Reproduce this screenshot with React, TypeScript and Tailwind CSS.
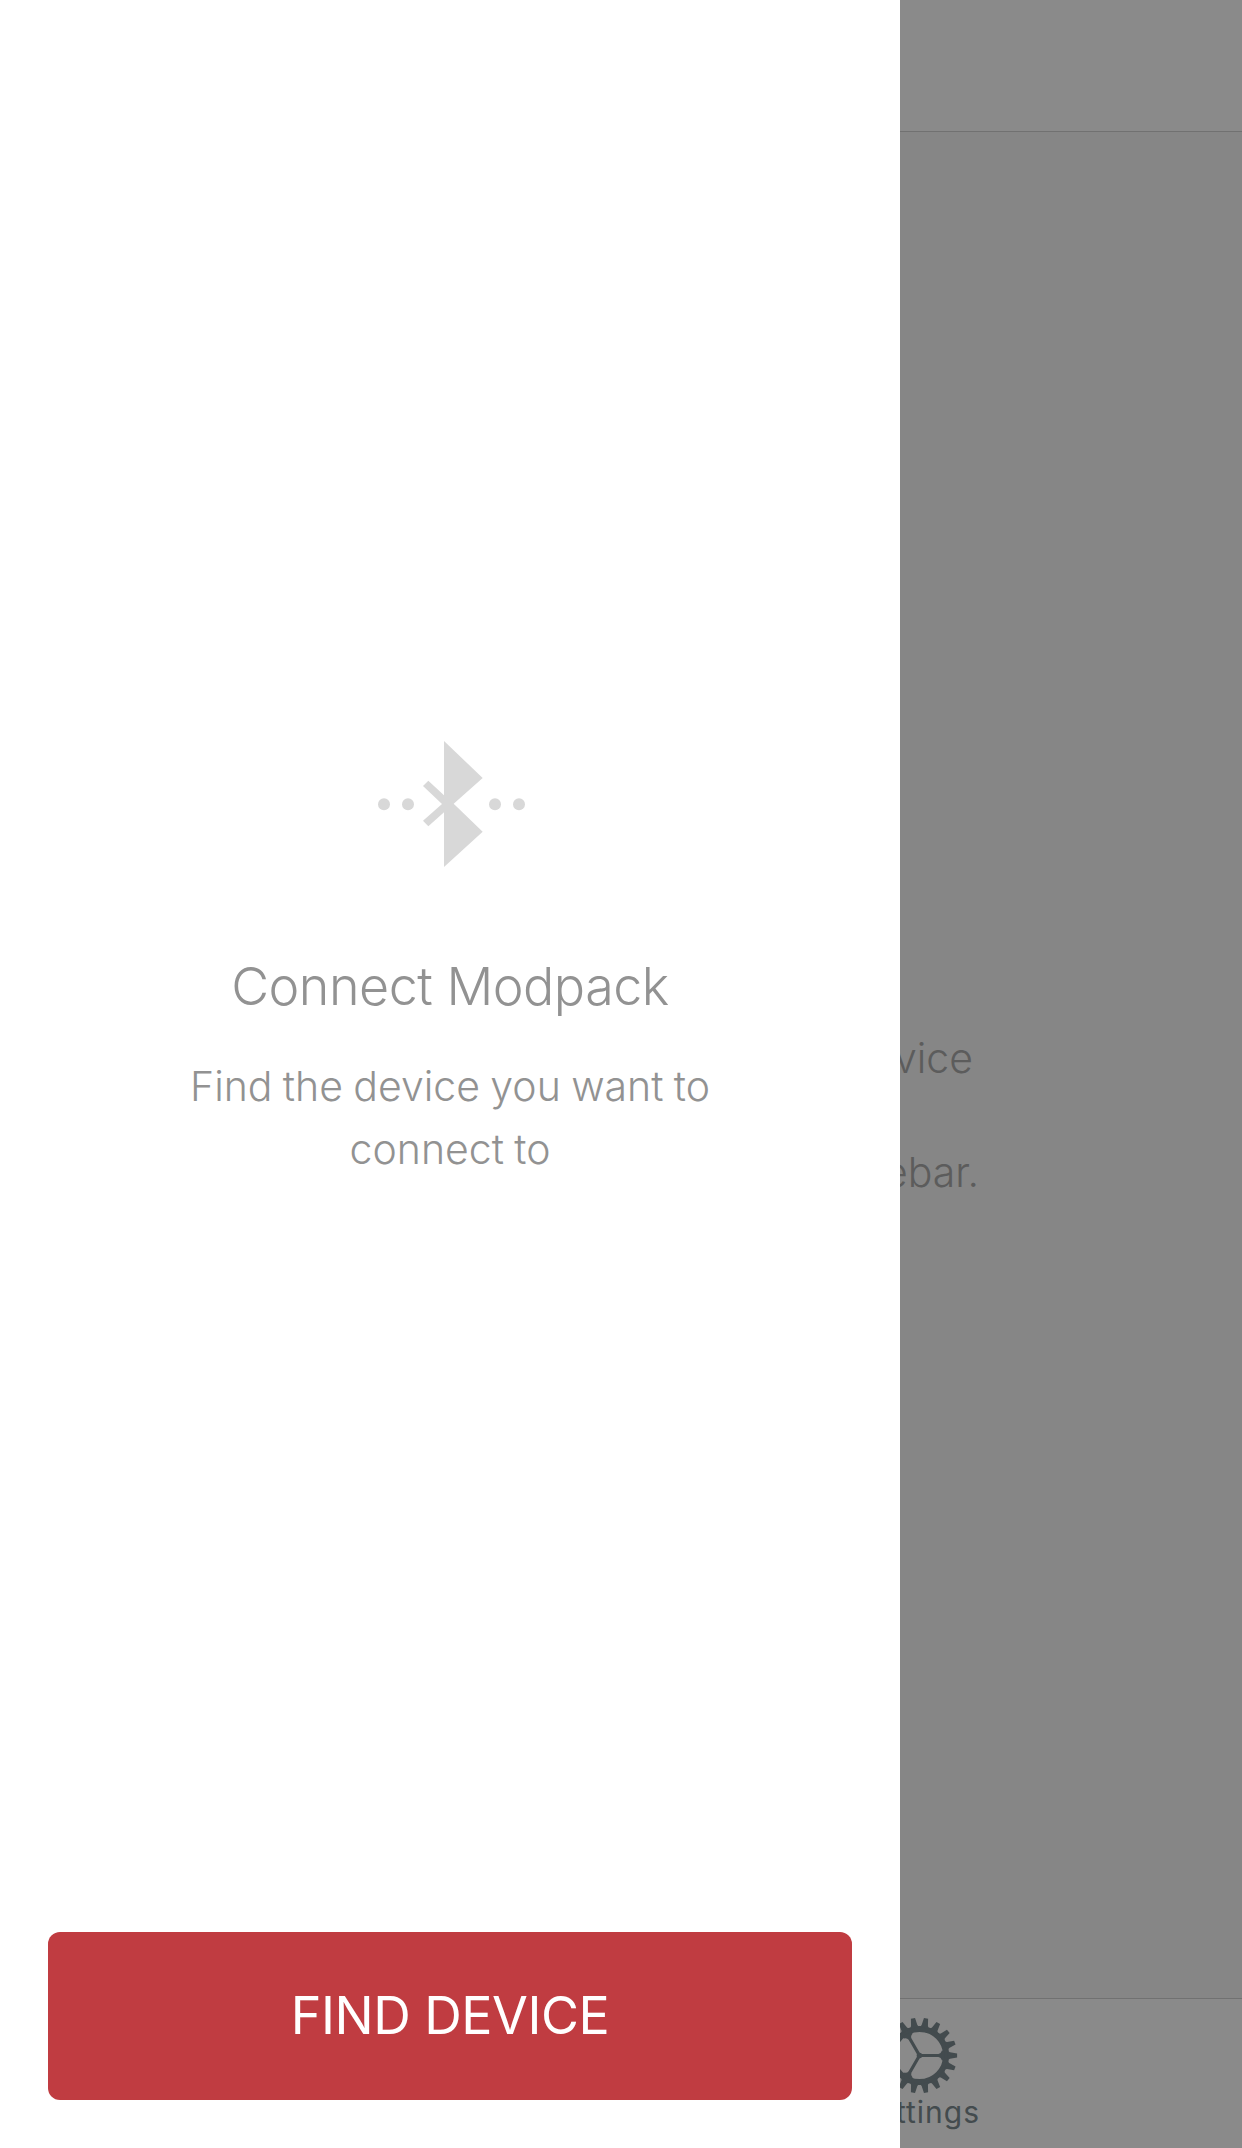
const TOOTH_ANGLES = Array.from({ length: 18 }, (_, i) => i * 20);
const SPOKE_ANGLES = [0, 120, 240];

function GearIcon() {
  return (
    <svg className="mt-[17.5px] ml-[880.5px] h-[77px] w-[77px] shrink-0" viewBox="-38.5 -38.5 77 77" fill="currentColor">
      <circle r="26.6" fill="none" stroke="currentColor" strokeWidth="6" />
      {TOOTH_ANGLES.map((angle) => (
        <path key={angle} d="M28 -4.6L30.5 -3.2L37.6 -2.1V2.1L30.5 3.2L28 4.6Z" transform={`rotate(${angle})`} />
      ))}
      {SPOKE_ANGLES.map((angle) => (
        <path key={angle} d="M0 -1.6H19Q21.5 -1.9 22.5 -5H25V5H22.5Q21.5 1.9 19 1.6H0Z" transform={`rotate(${angle})`} />
      ))}
      <circle r="2.8" />
    </svg>
  );
}

function BluetoothIcon() {
  return (
    <svg className="mt-[740.67px] ml-[378px] h-[126px] w-[147px] shrink-0 fill-[#d8d8d8]" viewBox="54 62 441 378">
      <path d="M252 62L368 173L281 250L368 334L252 440V276L205 318L189 301L246 251L189 197L205 181L252 225Z" />
      <circle cx="72" cy="252" r="18" />
      <circle cx="144" cy="252" r="18" />
      <circle cx="405" cy="252" r="18" />
      <circle cx="477" cy="252" r="18" />
    </svg>
  );
}

function Drawer() {
  return (
    <aside className="absolute inset-y-0 left-0 flex w-[900px] flex-col bg-white">
      <BluetoothIcon />
      <h1 className="mt-[88.33px] text-center text-[52px] leading-[64px] font-[350] tracking-[-0.5px] text-[#929292]">
        Connect Modpack
      </h1>
      <p className="mt-[36px] text-center text-[41px] leading-[63px] font-[340] [word-spacing:-1.2px] text-[#929292]">
        Find the device you want to
        <br />
        connect to
      </p>
      <button className="mx-12 mt-auto mb-12 h-[168px] rounded-xl bg-[#c03c41] text-[52px] font-normal tracking-[-0.5px] text-white">
        FIND DEVICE
      </button>
    </aside>
  );
}

export default function App() {
  return (
    <div className="relative flex h-[2148px] w-[1242px] flex-col overflow-hidden bg-[#868686] font-['Inter',sans-serif]">
      <header className="h-[132px] shrink-0 border-b border-[#717171] bg-[#8a8a8a]" />
      <main className="flex-1 text-right text-[41px] leading-[50px] font-light text-[#5c5c5c]">
        <p className="mt-[901px] pr-[269px]">device</p>
        <p className="mt-[64px] pr-[263px]">sidebar.</p>
      </main>
      <nav className="flex h-[150px] shrink-0 flex-col border-t border-[#717171] bg-[#8a8a8a] text-[#434b4e]">
        <GearIcon />
        <span className="pr-[262px] text-right text-[30px] leading-[36px] tracking-[1px]">Settings</span>
      </nav>
      <Drawer />
    </div>
  );
}
